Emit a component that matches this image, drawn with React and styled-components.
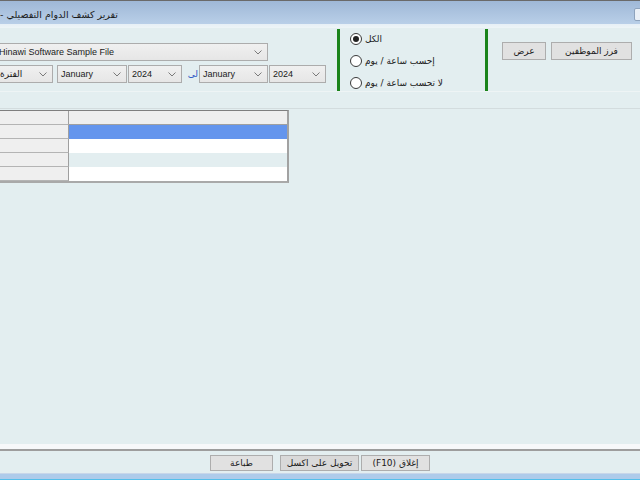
import React from "react";
import styled, { createGlobalStyle } from "styled-components";

const Global = createGlobalStyle`
  html, body { margin: 0; padding: 0; background: #e3eef0; }
  #root { width: 640px; height: 480px; overflow: hidden; }
`;

const Root = styled.div`
  width: 640px;
  height: 480px;
  overflow: hidden;
  display: flex;
  flex-direction: column;
  background: #e3eef0;
  font-family: "Liberation Sans", "DejaVu Sans", sans-serif;
  font-size: 9px;
  color: #111;
`;

const TitleBar = styled.div`
  height: 23px;
  flex: none;
  border-top: 1px solid #6a6a6a;
  background: linear-gradient(#9fb8d7, #b9cfe8);
  display: flex;
  align-items: center;
  justify-content: space-between;
`;

const TitleText = styled.div`
  width: 118px;
  direction: rtl;
  white-space: nowrap;
  font-family: "DejaVu Sans", sans-serif;
  font-size: 9.5px;
  color: #1a1a1a;
  padding-top: 3px;
`;

const WinButton = styled.div`
  width: 10px;
  height: 11px;
  margin-right: -6px;
  margin-top: 4px;
  border: 1px solid #8ea3bd;
  border-radius: 2px;
  background: #eaf0f7;
`;

const Highlight = styled.div`
  height: 4px;
  flex: none;
  background: linear-gradient(#e6eff6, #eef5f7);
`;

const TopPanel = styled.div`
  height: 63px;
  flex: none;
  display: flex;
  border-bottom: 1px solid #eef4f5;
`;

const Fields = styled.div`
  width: 325px;
  flex: none;
  padding-top: 15px;
  display: flex;
  flex-direction: column;
  gap: 4px;
`;

const FieldRow = styled.div`
  display: flex;
  align-items: center;
`;

const Combo = styled.div`
  box-sizing: border-box;
  width: ${(p) => p.$w}px;
  margin-left: ${(p) => p.$ml || 0}px;
  height: 18px;
  flex: none;
  border: 1px solid #acacac;
  background: linear-gradient(#f0f0f0, #e6e6e6);
  display: flex;
  align-items: center;
  justify-content: space-between;
  padding: 0 5px 0 ${(p) => p.$pl ?? 3}px;
  white-space: nowrap;
  overflow: hidden;
  font-family: ${(p) => (p.$ar ? '"DejaVu Sans", sans-serif' : '"Liberation Sans", sans-serif')};
  font-size: 9px;
  color: #1a1a1a;
`;

const ToLabel = styled.span`
  width: 17px;
  flex: none;
  text-align: right;
  padding-right: 1px;
  box-sizing: border-box;
  font-family: "DejaVu Sans", sans-serif;
  font-size: 9px;
  color: #2b55c4;
`;

const Chevron = () => (
  <svg width="8" height="5" viewBox="0 0 8 5">
    <path d="M0.5 0.5 L4 4 L7.5 0.5" fill="none" stroke="#7a7a7a" strokeWidth="1" />
  </svg>
);

const GreenBar = styled.div`
  width: 3px;
  flex: none;
  margin-left: ${(p) => p.$ml}px;
  margin-top: 1px;
  background: #1b841b;
`;

const Radios = styled.div`
  width: 135px;
  flex: none;
  padding: 5px 0 0 10px;
  display: flex;
  flex-direction: column;
  gap: 10px;
`;

const RadioRow = styled.div`
  height: 12px;
  display: flex;
  align-items: center;
  gap: 3px;
  font-family: "DejaVu Sans", sans-serif;
  font-size: 9px;
  color: #1a1a1a;
  white-space: nowrap;
`;

const Circle = styled.span`
  box-sizing: border-box;
  width: 12px;
  height: 12px;
  flex: none;
  border-radius: 50%;
  border: 1px solid #3a3a3a;
  background: #fff;
  display: flex;
  align-items: center;
  justify-content: center;
  &::after {
    content: "";
    width: 6px;
    height: 6px;
    border-radius: 50%;
    background: ${(p) => (p.$on ? "#222" : "transparent")};
  }
`;

const Actions = styled.div`
  display: flex;
  gap: 5px;
  padding: 14px 0 0 14px;
  align-items: flex-start;
`;

const Btn = styled.div`
  box-sizing: border-box;
  width: ${(p) => p.$w}px;
  height: ${(p) => p.$h || 18}px;
  flex: none;
  margin-right: ${(p) => p.$mr || 0}px;
  border: 1px solid #adadad;
  background: ${(p) => (p.$dark ? "#d9d9d9" : "#e1e1e1")};
  display: flex;
  align-items: center;
  justify-content: center;
  font-family: "DejaVu Sans", sans-serif;
  font-size: 9px;
  color: #1a1a1a;
  white-space: nowrap;
`;

const Gap = styled.div`
  height: 16px;
  flex: none;
`;

const Content = styled.div`
  flex: 1;
  border-top: 1px solid #d3dcde;
  padding-top: 1px;
`;

const Grid = styled.div`
  width: 289px;
  display: grid;
  grid-template-columns: 69px 1fr;
  grid-auto-rows: 14px;
  border-top: 1px solid #7f7f7f;
  border-right: 2px solid #a2a2a2;
  border-bottom: 2px solid #a9a9a9;
  box-sizing: border-box;
`;

const RowHead = styled.div`
  background: #efefef;
  border-right: 1px solid #9f9f9f;
  border-bottom: 1px solid #b4b4b4;
`;

const Cell = styled.div`
  background: ${(p) => p.$bg};
  border-bottom: ${(p) => (p.$line ? "1px solid #a0a0a0" : "none")};
`;

const Separator = styled.div`
  height: 5px;
  flex: none;
  background: #f7f8fa;
  border-bottom: 2px solid #9d9d9d;
`;

const ButtonBar = styled.div`
  height: 22px;
  flex: none;
  display: flex;
  justify-content: center;
  align-items: flex-start;
  padding-top: 4px;
  box-sizing: border-box;
  gap: 2px;
`;

const BottomBand = styled.div`
  height: 5px;
  flex: none;
  border-top: 1px solid #c8d6e9;
  background: #aecbea;
  border-bottom: 1px solid #55bfea;
`;

const rows = [
  { bg: "#efefef", line: true },
  { bg: "#6495ed" },
  { bg: "#ffffff" },
  { bg: "#e3eef0" },
  { bg: "#ffffff" },
];

export default function App() {
  return (
    <Root>
      <Global />
      <TitleBar>
        <TitleText>تقرير كشف الدوام التفصيلي -</TitleText>
        <WinButton />
      </TitleBar>
      <Highlight />
      <TopPanel>
        <Fields>
          <FieldRow>
            <Combo $w={272} $ml={-4} $pl={2}>
              <span>Hinawi Software Sample File</span>
              <Chevron />
            </Combo>
          </FieldRow>
          <FieldRow>
            <Combo $w={57} $ml={-4} $pl={3} $ar>
              <span>الفترة</span>
              <Chevron />
            </Combo>
            <Combo $w={70} $ml={4}>
              <span>January</span>
              <Chevron />
            </Combo>
            <Combo $w={54} $ml={1}>
              <span>2024</span>
              <Chevron />
            </Combo>
            <ToLabel>لى</ToLabel>
            <Combo $w={69}>
              <span>January</span>
              <Chevron />
            </Combo>
            <Combo $w={57} $ml={1}>
              <span>2024</span>
              <Chevron />
            </Combo>
          </FieldRow>
        </Fields>
        <GreenBar $ml={12} />
        <Radios>
          <RadioRow>
            <Circle $on />
            <span>الكل</span>
          </RadioRow>
          <RadioRow>
            <Circle />
            <span>إحسب ساعة / يوم</span>
          </RadioRow>
          <RadioRow>
            <Circle />
            <span>لا تحسب ساعة / يوم</span>
          </RadioRow>
        </Radios>
        <GreenBar $ml={0} />
        <Actions>
          <Btn $w={44}>عرض</Btn>
          <Btn $w={81}>فرز الموظفين</Btn>
        </Actions>
      </TopPanel>
      <Gap />
      <Content>
        <Grid>
          {rows.map((r, i) => (
            <React.Fragment key={i}>
              <RowHead />
              <Cell $bg={r.bg} $line={r.line} />
            </React.Fragment>
          ))}
        </Grid>
      </Content>
      <Separator />
      <ButtonBar>
        <Btn $w={63} $h={16} $mr={5}>طباعة</Btn>
        <Btn $w={79} $h={16} $dark>تحويل على اكسل</Btn>
        <Btn $w={69} $h={16}>(F10) إغلاق</Btn>
      </ButtonBar>
      <BottomBand />
    </Root>
  );
}
